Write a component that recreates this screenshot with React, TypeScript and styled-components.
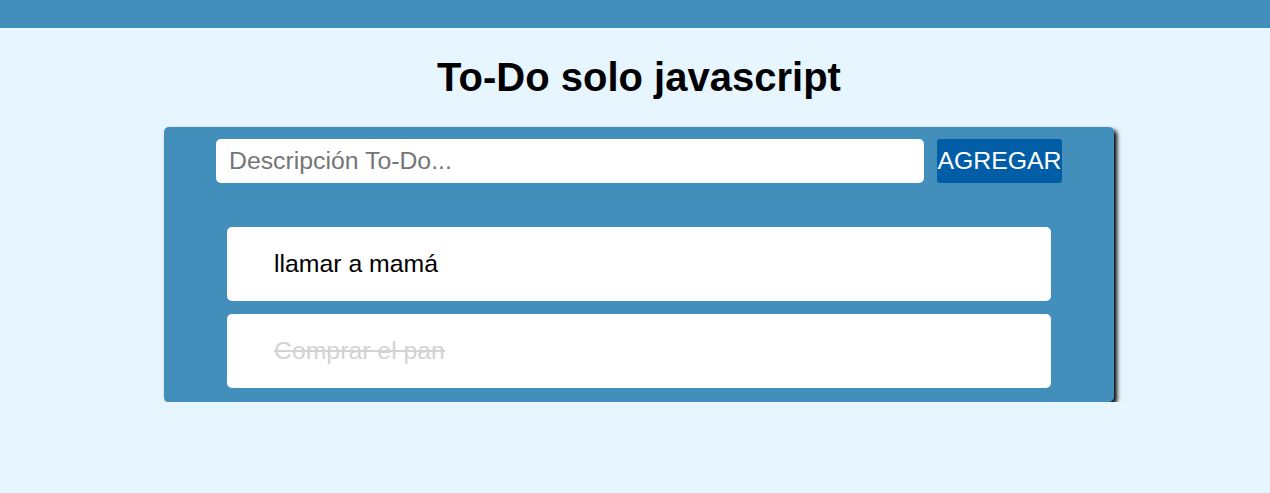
import React from "react";
import styled, { createGlobalStyle } from "styled-components";

const Global = createGlobalStyle`
  html, body { margin: 0; padding: 0; background: #e6f5fe; }
  body { font-family: "Liberation Sans", Arial, sans-serif; }
`;

const TopBar = styled.div`
  height: 28px;
  background: #428fbc;
`;

const Main = styled.main`
  padding-left: 8px;
  display: flex;
  flex-direction: column;
  align-items: center;
`;

const Title = styled.h1`
  margin: 26px 0 27px;
  font-size: 40px;
  line-height: 46px;
  font-weight: bold;
  color: #000;
`;

const Card = styled.section`
  width: 950px;
  box-sizing: border-box;
  background: #428fbc;
  border-radius: 5px;
  box-shadow: 3px 3px 4px #000;
  padding: 12px 52px 14px;
  display: flex;
  flex-direction: column;
`;

const Form = styled.form`
  display: flex;
  gap: 13px;
  margin-bottom: 44px;
`;

const Input = styled.input`
  flex: 1;
  height: 44px;
  box-sizing: border-box;
  border: none;
  border-radius: 5px;
  padding: 0 13px;
  font-family: "Liberation Sans", Arial, sans-serif;
  font-size: 24.8px;
  color: #000;
  outline: none;
  &::placeholder { color: #757575; }
`;

const Button = styled.button`
  width: 125px;
  height: 44px;
  border: none;
  border-radius: 3px;
  background: #015ea6;
  color: #fff;
  font-family: "Liberation Sans", Arial, sans-serif;
  font-size: 24.8px;
  padding: 0;
  cursor: pointer;
`;

const List = styled.ul`
  list-style: none;
  margin: 0 11px;
  padding: 0;
  display: flex;
  flex-direction: column;
  gap: 13px;
`;

const Item = styled.li<{ $done?: boolean }>`
  height: 74px;
  box-sizing: border-box;
  background: #fff;
  border-radius: 5px;
  padding: 0 47px;
  display: flex;
  align-items: center;
  font-size: 24.8px;
  color: ${(p) => (p.$done ? "#d3d3d3" : "#000")};
  text-decoration: ${(p) => (p.$done ? "line-through" : "none")};
`;

export default function App() {
  const todos = [
    { text: "llamar a mamá", done: false },
    { text: "Comprar el pan", done: true },
  ];
  return (
    <>
      <Global />
      <TopBar />
      <Main>
        <Title>To-Do solo javascript</Title>
        <Card>
          <Form onSubmit={(e) => e.preventDefault()}>
            <Input placeholder="Descripción To-Do..." />
            <Button type="submit">AGREGAR</Button>
          </Form>
          <List>
            {todos.map((t) => (
              <Item key={t.text} $done={t.done}>
                {t.text}
              </Item>
            ))}
          </List>
        </Card>
      </Main>
    </>
  );
}
